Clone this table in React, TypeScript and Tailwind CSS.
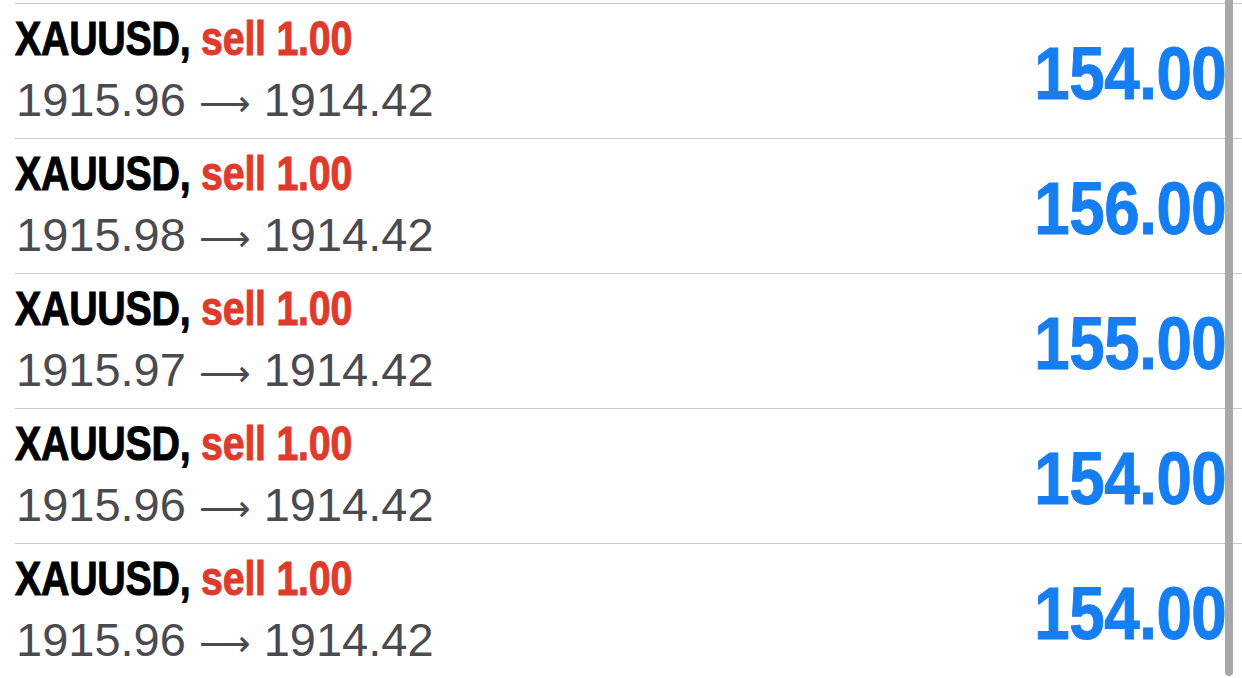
import React from 'react'

const trades = [
  { symbol: 'XAUUSD', side: 'sell 1.00', open: '1915.96', close: '1914.42', profit: '154.00' },
  { symbol: 'XAUUSD', side: 'sell 1.00', open: '1915.98', close: '1914.42', profit: '156.00' },
  { symbol: 'XAUUSD', side: 'sell 1.00', open: '1915.97', close: '1914.42', profit: '155.00' },
  { symbol: 'XAUUSD', side: 'sell 1.00', open: '1915.96', close: '1914.42', profit: '154.00' },
  { symbol: 'XAUUSD', side: 'sell 1.00', open: '1915.96', close: '1914.42', profit: '154.00' },
]

const App = () => {
  return (
    <div className="relative w-[1242px] h-[678px] bg-white overflow-hidden pt-[3px] font-['Liberation_Sans',Arial,sans-serif]">
      {trades.map((t, i) => (
        <div
          key={i}
          className="ml-[15px] h-[135px] border-t border-[#c8c8cc] flex items-center justify-between pr-[16px]"
        >
          <div className="flex flex-col">
            <div className="text-[48px] leading-[61px] font-bold">
              <span className="inline-block origin-left scale-x-[0.82] whitespace-nowrap tracking-[-0.3px] [-webkit-text-stroke:1px_currentColor]">
                <span className="text-black">{t.symbol}, </span>
                <span className="text-[#e03a2c]">{t.side}</span>
              </span>
            </div>
            <div className="text-[47px] leading-[61px] text-[#4a4a4f] pl-[1px] whitespace-nowrap">
              {t.open}{' '}
              <span className="font-['DejaVu_Sans',sans-serif] text-[36px]">⟶</span>{' '}
              {t.close}
            </div>
          </div>
          <div className="text-[74px] leading-[74px] mt-[6px] font-bold text-[#157ef2]">
            <span className="inline-block origin-right scale-x-[0.86] tracking-[-0.5px] [-webkit-text-stroke:1px_currentColor]">
              {t.profit}
            </span>
          </div>
        </div>
      ))}

      {/* scroll indicator */}
      <div className="absolute right-[9px] top-[-10px] h-[686px] w-[8px] rounded-full bg-[#a8a8a8]" />
    </div>
  )
}

export default App
